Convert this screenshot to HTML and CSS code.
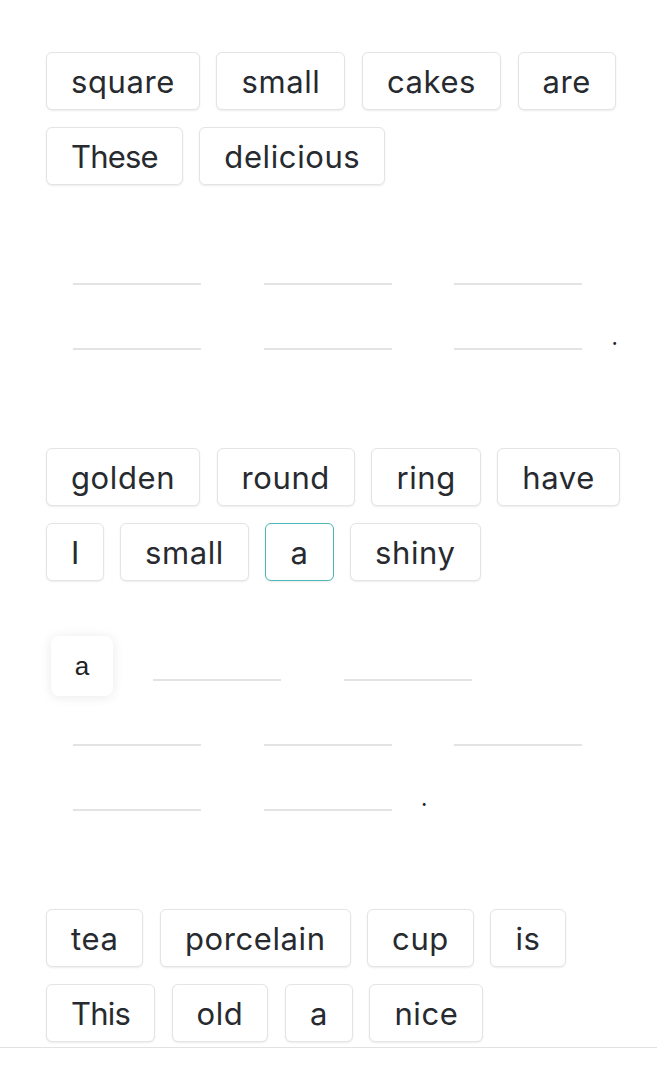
FILE: index.html
```html
<!DOCTYPE html>
<html>
	<head>
		<meta charset="UTF-8">
		<title>Sentence builder</title>
		<link rel="stylesheet" href="styles.css">
	</head>
	<body>
		<div class="page">
			<div class="task">
				<div class="bank">
					<span class="chip">square</span>
					<span class="chip">small</span>
					<span class="chip">cakes</span>
					<span class="chip">are</span>
					<span class="chip cap">These</span>
					<span class="chip">delicious</span>
				</div>
				<div class="answer">
					<span class="slot"></span>
					<span class="slot"></span>
					<span class="slot"></span>
					<span class="slot"></span>
					<span class="slot"></span>
					<span class="slot"></span>
					<span class="dot">.</span>
				</div>
			</div>

			<div class="task">
				<div class="bank">
					<span class="chip">golden</span>
					<span class="chip">round</span>
					<span class="chip">ring</span>
					<span class="chip">have</span>
					<span class="chip cap">I</span>
					<span class="chip">small</span>
					<span class="chip active">a</span>
					<span class="chip">shiny</span>
				</div>
				<div class="answer">
					<span class="filled"><span class="drag">a</span></span>
					<span class="slot"></span>
					<span class="slot"></span>
					<span class="slot"></span>
					<span class="slot"></span>
					<span class="slot"></span>
					<span class="slot"></span>
					<span class="slot"></span>
					<span class="dot">.</span>
				</div>
			</div>

			<div class="task last">
				<div class="bank">
					<span class="chip">tea</span>
					<span class="chip">porcelain</span>
					<span class="chip">cup</span>
					<span class="chip">is</span>
					<span class="chip cap">This</span>
					<span class="chip">old</span>
					<span class="chip">a</span>
					<span class="chip">nice</span>
				</div>
			</div>
		</div>
	</body>
</html>
```

FILE: styles.css
```css
*{
    margin: 0;
    padding: 0;
    box-sizing: border-box;
}
body{
    background: #fff;
    font-family: "Inter", "Noto Sans", sans-serif;
    color: #272a2f;
}
.page{
    padding: 52px 0 0 0;
}
.task{
    margin-bottom: 98px;
}
.task.last{
    margin-bottom: 0;
    padding-bottom: 5px;
    border-bottom: 1px solid #e2e2e2;
}
.bank{
    display: flex;
    flex-wrap: wrap;
    gap: 17px 16.5px;
    padding: 0 30px 0 46px;
}
.chip{
    display: inline-flex;
    align-items: center;
    justify-content: center;
    height: 58px;
    padding: 0 24px;
    border: 1px solid #e4e4e4;
    border-radius: 6px;
    background: #fff;
    box-shadow: 0 1px 2px rgba(0,0,0,0.08);
    font-size: 31px;
    letter-spacing: 0.6px;
    line-height: 1;
}
/* words that start with a capital sit a little tighter */
.chip.cap{
    letter-spacing: -0.8px;
}
.chip.active{
    border-color: #4bb7b7;
}
.answer{
    display: flex;
    flex-wrap: wrap;
    margin-top: 35px;
    padding-left: 46px;
}
.slot{
    width: 128px;
    height: 65px;
    margin: 0 35.5px 0 27px;
    border-bottom: 2px solid #e3e3e3;
}
.filled{
    width: 62px;
    height: 65px;
    margin: 0 13px 0 5px;
}
.drag{
    display: flex;
    align-items: center;
    justify-content: center;
    width: 62px;
    height: 60px;
    margin-top: 20px;
    border-radius: 8px;
    background: #fff;
    box-shadow: 0 1px 12px rgba(0,0,0,0.09);
    font-family: "Liberation Sans", sans-serif;
    font-size: 26px;
    color: #222;
}
.dot{
    align-self: flex-end;
    margin: 0 0 2px -6px;
    font-size: 22px;
    line-height: 1;
    color: #222;
}
```
